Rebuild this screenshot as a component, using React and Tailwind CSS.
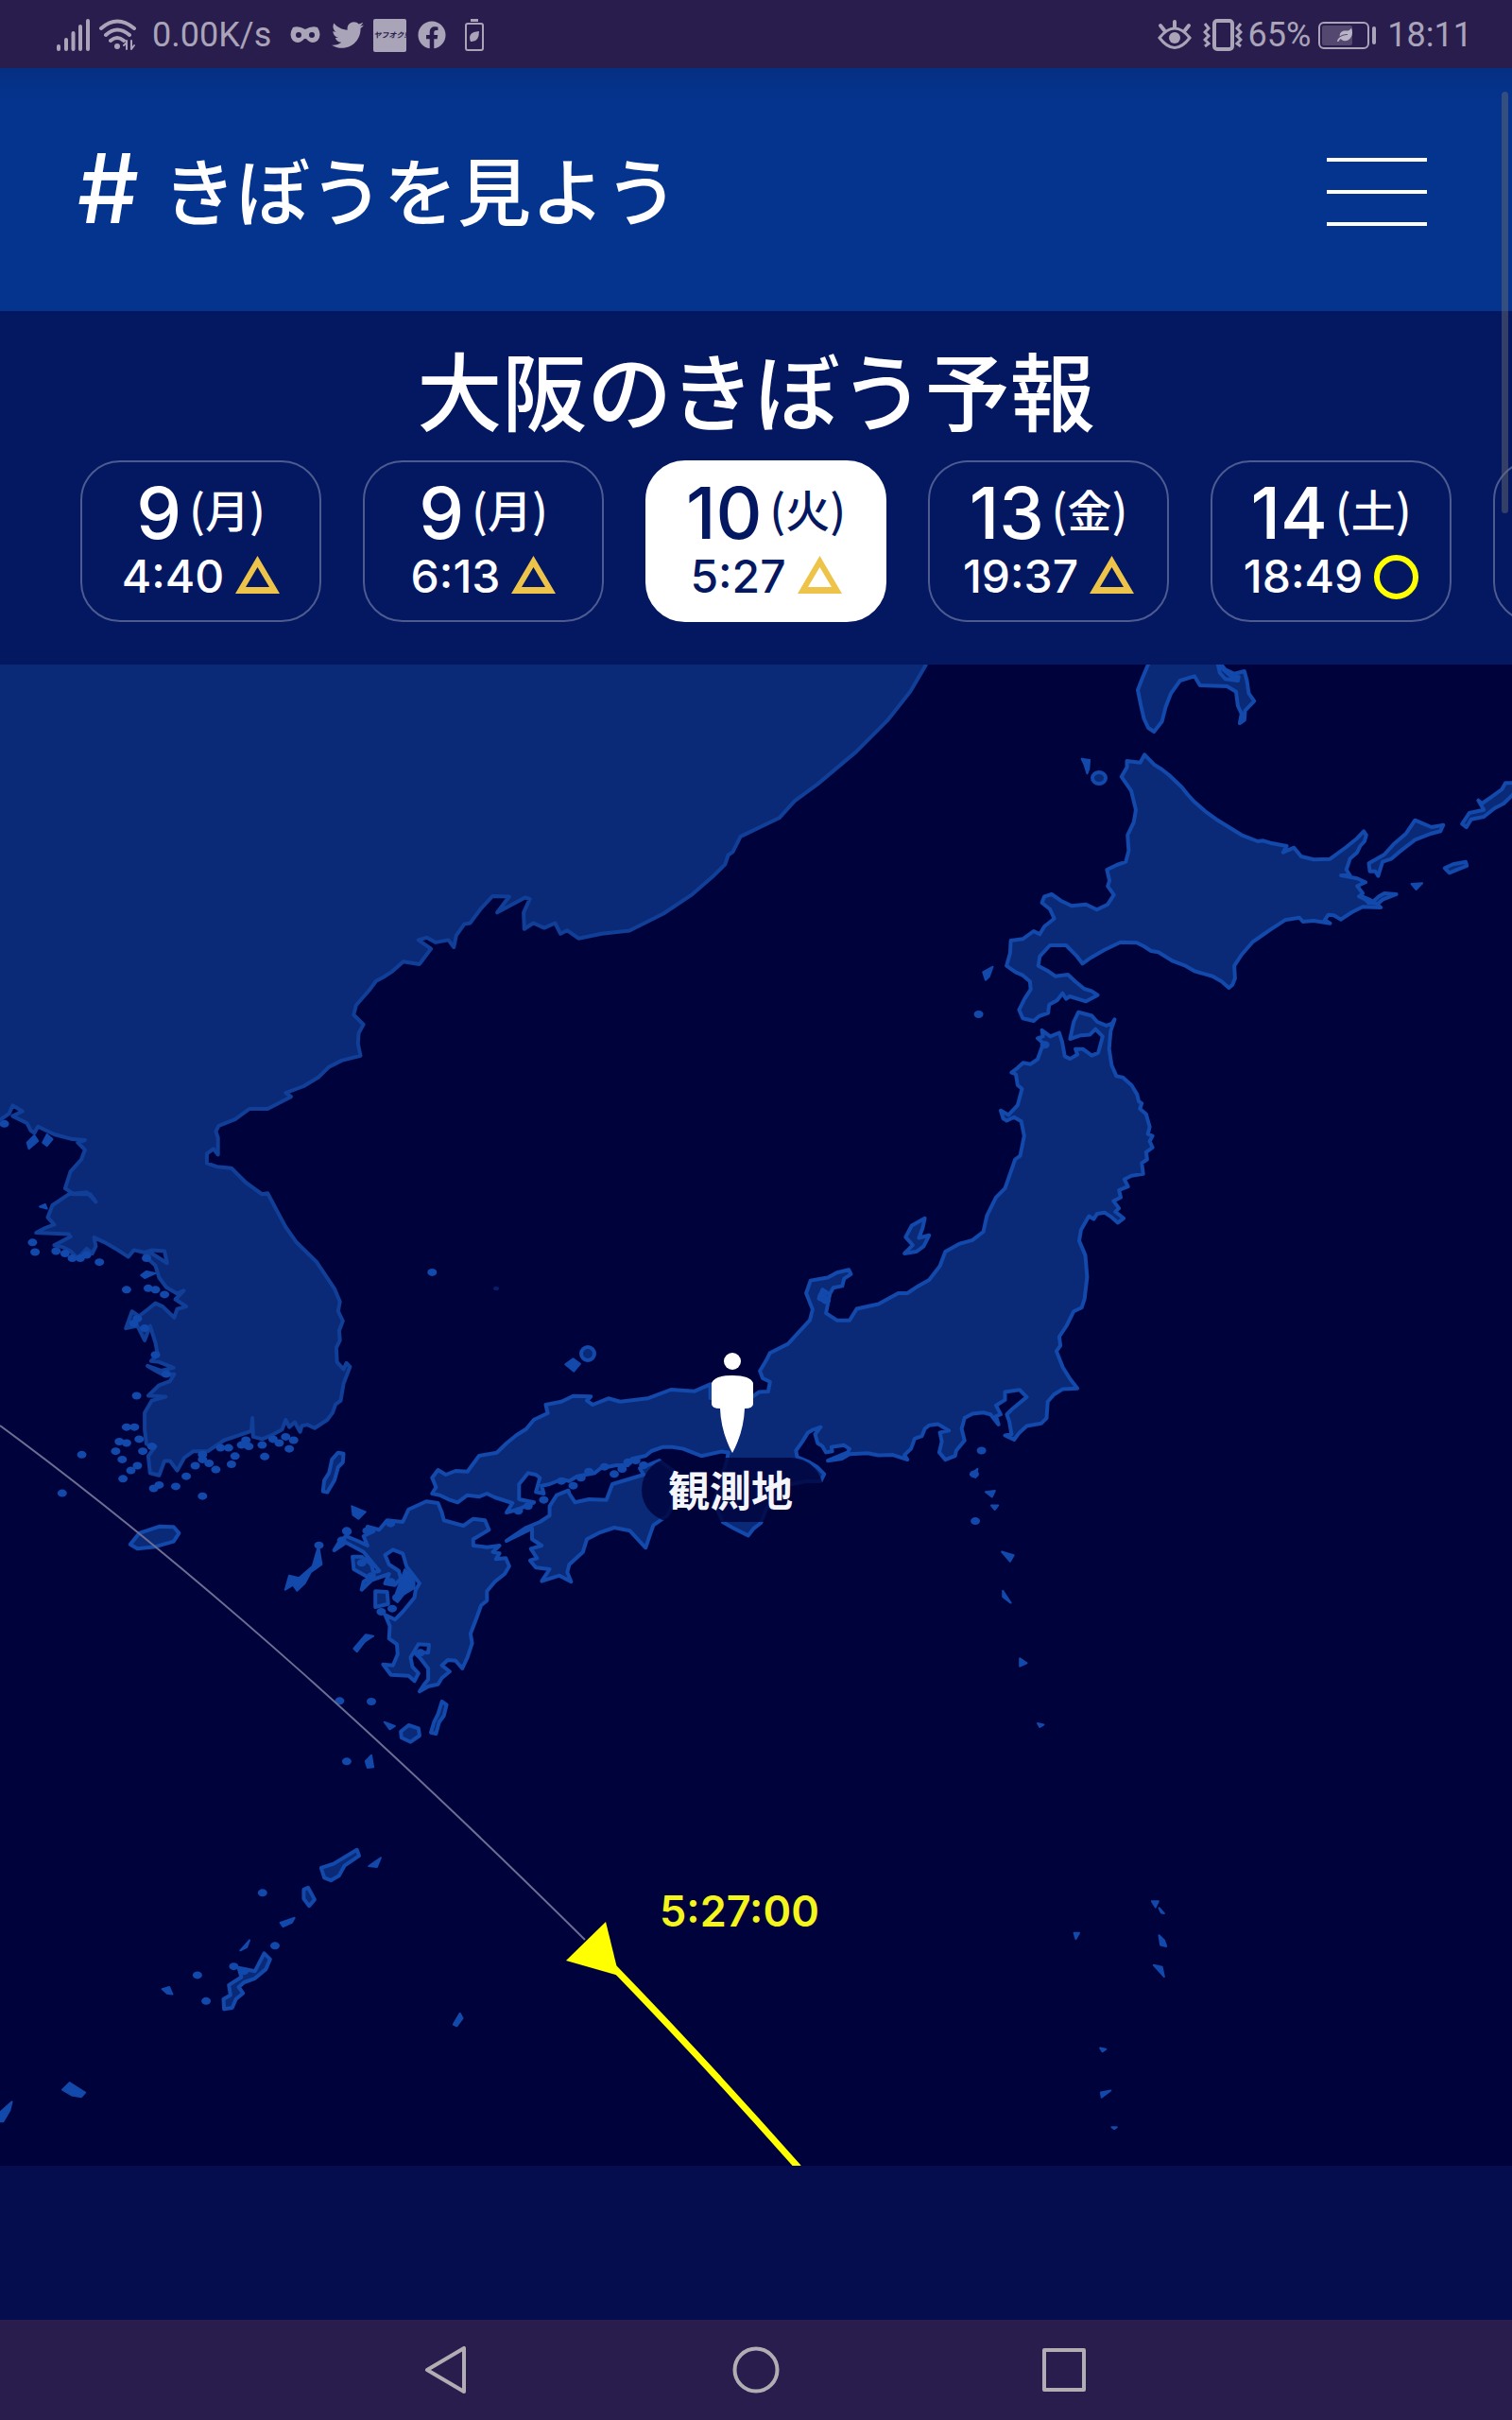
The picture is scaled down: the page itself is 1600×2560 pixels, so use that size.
import { useState } from "react"
import { FaFacebook, FaLeaf, FaTwitter } from "react-icons/fa"

const PASSES = [
  { id: 1, day: "9", weekday: "月", time: "4:40", mark: "fair" },
  { id: 2, day: "9", weekday: "月", time: "6:13", mark: "fair" },
  { id: 3, day: "10", weekday: "火", time: "5:27", mark: "fair" },
  { id: 4, day: "13", weekday: "金", time: "19:37", mark: "fair" },
  { id: 5, day: "14", weekday: "土", time: "18:49", mark: "good" },
  { id: 6, day: "", weekday: "", time: "", mark: "" }
]

// map sheets: origin x, origin y, scale x, scale y
const SHEETS = {
  west: [0, 900, 600 / 1568, 800 / 1568],
  north: [1000, 700, 600 / 1568, 1 / 3],
  east: [700, 1060, 600 / 1568, 600 / 1568],
  south: [250, 1380, 650 / 1568, 1 / 3],
  okinawa: [0, 1900, 900 / 1568, 660 / 1568],
  pacific: [1000, 1550, 600 / 1568, 1010 / 1568],
  over: [0, 0, 1600 / 980, 1600 / 980]
}

function project(sheet, points) {
  const [ox, oy, kx, ky] = SHEETS[sheet]
  return points.split(" ").map((p) => {
    const [x, y] = p.split(",").map(Number)
    return `${(ox + x * kx).toFixed(1)} ${(oy + y * ky).toFixed(1)}`
  })
}

function outline(...parts) {
  return `M${parts.flatMap(([sheet, points]) => project(sheet, points)).join("L")}Z`
}

const CONTINENT = outline(
  ["over", "-10,420 600,420 600,431 590,448 575,467 555,487 530,508 515,519 505,530 480,542 475,552 472,554 470,560 463,567 448,580 430,592 408,603 390,605 375,608"],
  ["west", "1568,165 1550,172 1535,150 1505,160 1475,150 1450,162 1448,128 1465,100 1452,97 1375,128 1408,95 1362,94 1330,120 1300,150 1284,152 1262,175 1255,200 1240,185 1205,190 1180,180 1157,185 1192,203 1160,235 1115,230 1085,250 1060,262 1040,270 1020,290 985,320 978,340 1005,360 992,378 990,400 997,425 945,435 910,448 880,470 840,488 790,502 805,510 740,535 690,535 650,557 605,570 597,582 603,595 603,630 590,618 572,628 572,648 600,655 640,658 680,688 725,712 740,710 765,745 790,780 820,812 875,852 925,908 940,935 935,955 948,975 938,995 940,1015 930,1030 932,1060 950,1075 958,1062 968,1070 950,1105 942,1140 928,1148 920,1165 905,1180 870,1197 850,1190 835,1192 830,1205 815,1185 800,1195 790,1180 780,1200 750,1212 725,1220 700,1215 698,1176 695,1203 660,1212 620,1222 575,1245 535,1245 510,1258 490,1285 470,1265 455,1265 440,1295 415,1290 410,1255 430,1235 405,1230 400,1200 400,1165 420,1140 458,1132 410,1130 440,1108 470,1100 482,1085 455,1088 435,1080 408,1068 445,1078 480,1072 440,1060 418,1058 436,1045 430,1020 415,985 400,1015 380,985 348,990 365,955 385,965 410,950 430,938 450,945 482,968 490,950 515,945 485,930 508,912 490,918 460,905 440,885 430,860 400,840 420,835 462,855 455,830 420,828 400,833 370,828 355,842 320,825 290,812 260,802 265,820 255,835 240,825 215,845 195,830 175,822 150,818 195,800 190,795 100,792 125,782 150,775 132,760 145,735 190,712 240,708 265,728 250,712 205,712 180,700 195,665 225,640 235,620 215,605 235,600 200,598 150,588 105,572 95,585 85,580 75,565 35,550 62,540 35,528 25,545 0,558 -30,560"]
)

const HOKKAIDO = outline([
  "north",
  "552,295 580,328 600,342 620,360 655,398 670,420 690,445 720,475 750,500 785,525 820,550 865,570 880,568 900,575 945,585 935,605 965,590 985,618 1020,628 1065,626 1110,588 1140,560 1158,538 1165,550 1160,570 1148,585 1140,605 1120,625 1110,660 1120,678 1095,678 1140,688 1163,700 1140,712 1155,735 1145,745 1180,765 1200,745 1215,735 1248,738 1210,755 1195,770 1205,780 1155,778 1125,795 1095,818 1075,805 1060,803 1050,820 1065,830 1020,822 990,825 980,812 940,820 900,850 875,870 850,890 820,930 800,965 802,1005 795,1025 785,1035 765,1015 740,998 690,982 665,965 630,950 590,922 570,918 550,903 530,892 485,890 440,915 405,938 380,958 365,935 335,900 290,900 262,935 258,965 285,982 305,998 340,993 360,1015 385,1038 405,1045 422,1058 390,1078 345,1062 335,1070 325,1052 310,1075 288,1088 285,1115 260,1125 245,1140 215,1132 205,1105 220,1070 237,1040 235,1015 215,995 195,985 170,965 180,925 182,885 215,880 245,855 262,865 275,840 302,815 290,785 268,765 275,745 295,738 320,758 350,775 390,770 420,787 450,770 467,740 450,712 455,695 448,660 475,645 500,635 508,600 505,550 522,510 528,470 515,410 488,365 503,335 503,315 540,320"
])

const HONSHU = outline(
  ["east", "1153,28 1190,38 1205,55 1230,65 1245,60 1253,48 1242,80 1238,130 1245,175 1258,205 1275,208 1300,230 1315,255 1320,275 1328,280 1323,295 1340,310 1350,345 1345,365 1358,370 1350,385 1358,402 1340,415 1343,435 1328,445 1332,475 1300,480 1280,490 1290,510 1265,520 1270,540 1250,550 1265,570 1255,580 1278,598 1262,610 1245,595 1225,582 1205,585 1195,600 1182,592 1160,630 1155,660 1172,700 1177,760 1170,820 1162,845 1140,855 1120,895 1100,925 1103,950 1092,965 1110,1010 1130,1042 1150,1068 1110,1070 1085,1085 1068,1105 1065,1150 1050,1165 1010,1172 990,1190 975,1210 950,1198 968,1195 962,1160 955,1140 970,1125 1010,1092 990,1072 950,1078 950,1100 925,1115 938,1140 925,1145 932,1168 910,1140 890,1135 860,1138 838,1150 830,1180 838,1212 815,1240 812,1255 785,1265 768,1245 775,1215 770,1190 795,1185 765,1167 740,1170 728,1180 720,1200 700,1207 690,1235 672,1252 680,1265 640,1252 600,1253 570,1247 520,1250 500,1262 460,1268 515,1245 520,1235 505,1225 470,1230 472,1242 455,1245 445,1228 432,1220 425,1195 440,1175 420,1182 405,1190 390,1215 372,1240 375,1258 405,1270 430,1285 450,1305 440,1325 400,1325 350,1335 310,1380 290,1400 275,1440 255,1455 240,1475 200,1455 170,1438 145,1385 165,1320 180,1270 185,1245 165,1243 110,1255 60,1235 30,1230"],
  ["south", "1090,452 1060,465 1045,480 1010,490 1000,510 970,510 930,520 915,535 870,545 850,560 830,555 800,570 780,575 785,600 765,595 775,550 765,540 745,535 722,570 722,618 760,628 720,650 690,660 705,630 660,612 640,600 620,610 590,605 565,628 545,620 520,605 500,600 510,580 500,550 515,525 535,540 560,528 590,530 620,480 665,470 690,440 715,415 740,395 760,365 795,345 790,318 830,308 860,290 905,292 895,305 910,318 950,298 980,308 1050,298 1110,270 1170,275 1210,253"],
  ["east", "135,1095 250,1092 270,1078 295,1077 300,1050 280,1040 272,1020 290,990 300,970 350,945 410,880 418,850 400,805 412,770 440,765 460,762 485,748 518,740 524,752 505,765 500,785 475,790 465,808 460,835 455,860 485,880 520,880 540,848 600,835 655,805 680,805 710,785 740,768 770,730 785,690 825,668 860,658 890,635 900,590 925,540 950,515 978,435 992,425 1003,370 995,330 975,318 955,328 945,322 938,300 960,312 985,285 997,240 985,230 980,200 968,195 985,182 1000,168 1020,172 1040,158 1052,125 1065,122 1040,100 1055,95 1052,78 1075,95 1100,85 1108,110 1115,150 1130,157 1150,145 1145,130 1165,130 1190,148 1208,140 1220,95 1200,75 1185,90 1160,92 1130,102 1140,55"]
)

const KYUSHU = outline([
  "south",
  "485,625 515,630 525,660 530,685 580,702 605,680 635,685 645,715 605,745 605,765 640,770 672,765 655,785 672,790 663,808 688,805 697,830 685,855 660,880 640,910 640,940 625,955 615,990 598,1045 602,1075 590,1120 577,1155 560,1130 540,1128 525,1145 545,1165 525,1185 515,1205 490,1212 468,1228 480,1205 490,1190 490,1155 468,1120 455,1105 490,1105 492,1080 465,1078 445,1120 450,1150 465,1170 455,1195 440,1178 395,1175 375,1142 400,1145 412,1110 410,1078 390,1060 392,1020 380,985 405,1000 425,975 455,930 458,905 468,885 435,832 425,790 400,778 380,795 390,825 415,845 420,870 405,890 380,885 390,855 345,875 320,905 325,880 340,868 300,840 297,800 320,800 345,825 350,850 365,845 325,785 280,755 250,780 262,755 280,735 310,750 335,765 325,735 350,720 335,705 365,715 385,685 425,690 440,650"
])

const SHIKOKU = outline([
  "south",
  "850,600 865,628 900,618 945,620 960,570 1000,555 1040,540 1030,520 1080,495 1150,560 1100,670 1065,700 1055,735 1045,772 1005,718 965,708 925,725 895,745 885,785 850,825 845,850 855,880 825,860 780,878 800,840 765,835 750,812 768,805 752,775 780,765 755,745 755,710 690,750 740,708 775,690 800,670 800,640 818,605 848,590"
])

const LAND = [
  outline(["north", "565,0 545,55 533,90 542,140 550,180 562,210 578,222 600,190 610,145 625,100 650,60 690,46 705,75 780,78 805,95 810,140 820,165 815,195 828,185 830,155 855,125 840,100 835,60 828,30 800,38 775,25 757,0"]),
  outline(["north", "1300,503 1345,525 1378,518 1370,538 1345,545 1300,565 1255,605 1235,625 1210,635 1198,680 1190,665 1175,665 1172,640 1215,612 1240,580 1275,545"]),
  outline(["north", "1590,385 1550,385 1540,405 1510,430 1485,450 1475,440 1490,470 1450,480 1430,515 1442,525 1455,500 1490,492 1520,465 1545,450 1590,400"]),
  outline(["north", "1382,655 1405,643 1440,635 1443,648 1420,658 1395,670"]),
  outline(["east", "728,598 692,618 675,650 695,672 672,695 705,690 725,675 740,645 712,652 722,625"]),
  outline(["west", "935,1248 950,1250 948,1268 935,1278 925,1305 905,1330 893,1328 897,1305 910,1290 918,1262"]),
  outline(["west", "360,1438 385,1415 440,1401 480,1402 495,1415 480,1432 430,1443 380,1447"]),
  outline(["south", "525,1260 537,1270 530,1305 518,1325 510,1362 497,1358 505,1325 515,1300"]),
  outline(["south", "440,1335 465,1345 468,1368 445,1388 422,1375 420,1355"]),
  outline(["south", "355,910 385,912 388,950 355,960"]),
  outline(["okinawa", "658,135 662,150 635,175 625,200 610,212 598,205 592,180 615,170"]),
  outline(["okinawa", "568,230 580,260 570,276 560,258 560,235"]),
  outline(["okinawa", "487,395 498,410 490,435 470,458 450,468 440,480 448,495 435,510 428,532 413,535 412,510 425,500 422,475 445,455 440,432 470,440"])
]

// islets too small to show any land inside the coast line
const ISLETS = [
  outline(["north", "378,308 400,312 398,340 393,355 385,325"]),
  outline(["north", "105,985 132,968 122,1000 112,1010"]),
  outline(["north", "1290,705 1320,703 1303,723"]),
  outline(["north", "1150,740 1175,752 1200,770 1170,768"]),
  outline(["south", "125,905 135,860 160,868 195,830 210,765 218,825 190,850 175,885 155,908 145,890"]),
  outline(["south", "330,1048 350,1052 328,1070 308,1102 300,1092"]),
  outline(["south", "295,640 330,658 312,680 298,668"]),
  outline(["south", "840,190 860,172 878,188 862,212"]),
  outline(["south", "378,1325 405,1338 392,1348"]),
  outline(["south", "330,1450 345,1430 350,1468 335,1470"]),
  outline(["south", "430,840 455,870 455,900 428,920 412,945 402,935"]),
  outline(["okinawa", "702,155 695,178 680,176"]),
  outline(["okinawa", "517,318 543,306 538,318 522,328"]),
  outline(["okinawa", "460,362 455,380 443,388"]),
  outline(["okinawa", "299,485 312,480 318,498 308,496"]),
  outline(["okinawa", "848,546 853,558 842,578 836,574"]),
  outline(["okinawa", "128,720 157,745 150,756 132,752 115,738"]),
  outline(["okinawa", "22,768 18,790 6,818 -4,818 -4,800"]),
  outline(["west", "75,605 95,590 105,602 80,618"]),
  outline(["west", "118,605 130,588 145,598 130,612"]),
  outline(["west", "110,738 125,733 130,742"]),
  outline(["west", "390,880 405,872 430,876 400,886"]),
  outline(["pacific", "70,15 90,6 85,20"]),
  outline(["pacific", "112,44 138,42 130,52"]),
  outline(["pacific", "128,66 147,66 138,73"]),
  outline(["pacific", "157,142 190,148 180,158"]),
  outline(["pacific", "160,206 182,226 160,216"]),
  outline(["pacific", "207,317 226,325 207,330"]),
  outline(["pacific", "256,424 273,426 262,430"]),
  outline(["pacific", "572,716 590,716 582,726"]),
  outline(["pacific", "592,727 606,736 598,735"]),
  outline(["pacific", "592,772 606,780 612,790 596,788"]),
  outline(["pacific", "577,821 600,824 606,840"]),
  outline(["pacific", "357,768 371,768 362,778"]),
  outline(["pacific", "429,957 445,959 435,963"]),
  outline(["pacific", "431,1030 458,1027 433,1038"]),
  outline(["pacific", "461,1087 475,1087 468,1090"])
]

// rocks along the Korean coast and in the Inland Sea, one dot each
const ROCKS = [
  ...project("west", "12,566 90,812 97,832 155,830 180,835 200,845 222,845 240,838 275,853 350,910 410,907 430,910 378,1130 350,1195 372,1195 330,1225 350,1228 320,1245 338,1262 385,1220 395,1245 420,1235 362,1285 380,1275 340,1302 425,1322 440,1315 486,1318 515,1297 540,1275 560,1262 578,1270 560,1252 597,1283 610,1238 632,1238 650,1255 640,1272 668,1232 688,1235 680,1222 725,1232 732,1256 755,1220 772,1228 790,1215 800,1240 812,1222 560,1338 172,1332 226,1252 1195,874 960,1412 945,1430 882,1440 1015,1410 1080,1395 380,970 400,990 370,980 430,1045 460,1085 455,920 405,845"),
  ...project("south", "785,620 745,640 720,655 900,530 940,515 965,538 985,522 1000,500 1020,495 1040,510 830,560 860,575 880,550 395,880 410,930 370,975 398,965 320,820 345,862 282,718 345,1260 282,1450 264,1258 470,1105"),
  ...project("east", "877,34 885,1240 865,1305 868,1435 445,812 455,825 1060,118"),
  ...project("okinawa", "507,376 431,428 364,450 380,515 484,243 450,440")
]

function LandMap() {
  return (
    <svg
      viewBox="0 703 1600 1588"
      className="block w-full bg-[#00033b]"
      role="img"
      aria-label="きぼうの軌道"
    >
      <g fill="#0a2a78" stroke="#1249ab" strokeWidth="4" strokeLinejoin="round">
        <path d={CONTINENT} stroke="#113f98" />
        <path d={HOKKAIDO} />
        <path d={HONSHU} />
        <path d={KYUSHU} />
        <path d={SHIKOKU} />
        {LAND.map((d, i) => (
          <path key={i} d={d} />
        ))}
        <ellipse cx="1163" cy="823" rx="7" ry="6" />
        <ellipse cx="622" cy="1432" rx="7" ry="7" />
        <path d={outline(["north", "755,10 760,35 775,55 810,60 812,48 790,45"])} />
        <path d={outline(["east", "435,820 445,795 465,808 460,830"])} />
      </g>
      <g fill="#1249ab" stroke="#1249ab" strokeWidth="2" strokeLinejoin="round">
        {ISLETS.map((d, i) => (
          <path key={i} d={d} />
        ))}
        {ROCKS.map((point, i) => {
          const [x, y] = point.split(" ")
          return <ellipse key={i} cx={x} cy={y} rx="4" ry="3" />
        })}
        <ellipse cx="525" cy="1363" rx="2" ry="1" opacity="0.4" />
      </g>

      {/* orbit */}
      <path
        d="M0 1508C220 1670 430 1865 619 2052"
        fill="none"
        stroke="#6b6d92"
        strokeWidth="2"
      />
      <path d="M650 2082Q745 2180 845 2293" fill="none" stroke="#ffff00" strokeWidth="7" />
      <path d="M641 2033L599 2074L655 2090Z" fill="#ffff00" />
      <text
        x="698"
        y="2038"
        fill="#f5f51e"
        fontSize="45"
        fontWeight="600"
        fontFamily="Inter, sans-serif"
      >
        5:27:00
      </text>

      {/* observer */}
      <rect x="679" y="1542" width="192" height="68" rx="34" fill="#00033b" opacity="0.82" />
      <circle cx="775" cy="1440" r="9" fill="#ffffff" />
      <path
        d="M753 1463Q756 1455 775 1455Q794 1455 797 1463V1485Q797 1490 788 1490Q787 1515 775 1537Q763 1515 762 1490Q753 1490 753 1485Z"
        fill="#ffffff"
      />
      <text
        x="773"
        y="1594"
        textAnchor="middle"
        fill="#f4f5fb"
        fontSize="44"
        fontWeight="700"
        fontFamily="'Noto Sans CJK JP', sans-serif"
      >
        観測地
      </text>
    </svg>
  )
}

function StatusBar() {
  return (
    <div className="flex h-[72px] items-center justify-between bg-[#291d4d] pt-[2px] pr-[42px] pl-[60px] font-[Roboto,sans-serif] text-4xl text-[#aaa4b9]">
      <div className="flex items-center">
        <svg viewBox="0 0 35 34" className="h-[34px] w-[35px]" stroke="currentColor" strokeWidth="4" strokeLinecap="round">
          <path d="M2 29V32M10 22V32M17.500 15V32M25 8V32M33 2V32" />
        </svg>
        <svg viewBox="0 0 40 34" className="ml-[10px] h-[34px] w-10" fill="none" stroke="currentColor" strokeWidth="4" strokeLinecap="round">
          <path d="M2 10Q19 -5 37 10M7 17Q19 6 32 17M12 23Q19 17 26 23" />
          <circle cx="19" cy="29" r="3" fill="currentColor" stroke="none" />
          <path d="M29 23V32M26 28L29 25M34 23V32M34 32L37 28" strokeWidth="2" />
        </svg>
        <span className="ml-4">0.00K/s</span>
        <svg viewBox="0 0 32 18" className="ml-5 h-[18px] w-8" fill="currentColor">
          <path
            fillRule="evenodd"
            d="M3 1Q9 -1 16 3Q23 -1 29 1Q34 9 29 15Q23 20 17 13H15Q9 20 3 15Q-2 9 3 1ZM9 6A3 3 0 1 0 9 12A3 3 0 1 0 9 6ZM23 6A3 3 0 1 0 23 12A3 3 0 1 0 23 6Z"
          />
        </svg>
        <FaTwitter className="ml-3 h-9 w-[34px]" />
        <span className="ml-[10px] flex h-[35px] w-[35px] items-center justify-center rounded-xs bg-[#aaa4b9] font-['Noto_Sans_CJK_JP',sans-serif] text-[8px] leading-none font-bold text-[#291d4d] italic">
          ヤフオク!
        </span>
        <FaFacebook className="ml-3 h-[30px] w-[30px]" />
        <svg viewBox="0 0 20 34" className="ml-5 h-[34px] w-5" fill="none" stroke="currentColor" strokeWidth="2">
          <path d="M6 1.500H14" strokeWidth="3" />
          <rect x="1" y="5" width="18" height="28" rx="2" />
          <path d="M6 24Q2 14 15 13Q15 25 6 24Z" fill="currentColor" stroke="none" />
        </svg>
      </div>
      <div className="flex items-center">
        <svg viewBox="0 0 36 32" className="h-8 w-9" fill="none" stroke="currentColor" strokeWidth="4" strokeLinecap="round">
          <path d="M2 19Q18 -1 34 19Q18 40 2 19Z" strokeWidth="3" />
          <circle cx="18" cy="19" r="6" fill="currentColor" stroke="none" />
          <path d="M18 2V8M3 6L7 11M33 6L29 11" />
        </svg>
        <svg viewBox="0 0 42 34" className="ml-3 h-[34px] w-[42px]" fill="none" stroke="currentColor" strokeWidth="4">
          <rect x="12" y="2" width="19" height="30" rx="3" />
          <path d="M2 5L6 10L2 14L6 18L2 22L6 26L2 29M40 5L36 10L40 14L36 18L40 22L36 26L40 29" strokeWidth="3" />
        </svg>
        <span className="ml-[6px]">65%</span>
        <span className="ml-2 flex items-center gap-[3px]">
          <span className="flex h-[29px] w-[54px] items-center rounded-md border-2 border-current p-[2px]">
            <span className="flex h-full w-8 items-center justify-end rounded-xs bg-[#544870]">
              <FaLeaf className="h-4 w-4 text-[#b9b3c6]" />
            </span>
          </span>
          <span className="h-[19px] w-1 rounded-full bg-current" />
        </span>
        <span className="ml-3">18:11</span>
      </div>
    </div>
  )
}

function Mark({ kind }) {
  if (kind === "good") {
    return (
      <svg viewBox="0 0 47 47" className="h-[47px] w-[47px]">
        <circle cx="23.500" cy="23.500" r="20.500" fill="none" stroke="#ffff00" strokeWidth="6" />
      </svg>
    )
  }
  return (
    <svg viewBox="0 0 47 47" className="h-[47px] w-[47px]">
      <path
        fillRule="evenodd"
        d="M23.500 1L47 41H0ZM23.500 13L11 34H36Z"
        fill="#edc449"
      />
    </svg>
  )
}

function PassButton({ pass, selected, onSelect }) {
  return (
    <button
      onClick={onSelect}
      aria-pressed={selected}
      className={
        "flex h-[171px] w-[255px] shrink-0 flex-col items-center rounded-[42px] border-2 pt-[18px] font-medium " +
        (selected
          ? "border-white bg-white text-[#041862]"
          : "border-[#4d5b90] text-white")
      }
    >
      {pass.day && (
        <>
          <span className="flex h-[70px] items-start gap-2">
            <span className="font-[Inter,sans-serif] text-[76px] leading-[70px]">{pass.day}</span>
            <span className="font-['Noto_Sans_CJK_JP',sans-serif] text-[47px] leading-[62px]">
              ({pass.weekday})
            </span>
          </span>
          <span className="flex h-[66px] items-center gap-3">
            <span className="font-[Inter,sans-serif] text-5xl leading-[60px]">{pass.time}</span>
            <Mark kind={pass.mark} />
          </span>
        </>
      )}
    </button>
  )
}

export default function App() {
  const [selectedId, setSelectedId] = useState(3)

  return (
    <div className="relative flex min-h-screen flex-col overflow-hidden bg-[#050d4e] font-['Noto_Sans_CJK_JP',sans-serif] text-white">
      <StatusBar />

      <header className="flex h-[257px] items-center justify-between bg-linear-to-b from-[#052f82] to-[#05348f] to-15% pt-1 pr-[90px] pl-[82px]">
        <h1 className="flex items-center pb-2 text-[78px] leading-none font-medium">
          <span className="w-[90px] font-[Inter,sans-serif] text-[102px] leading-none">#</span>
          きぼうを見よう
        </h1>
        <button aria-label="メニュー" className="flex w-[106px] flex-col gap-[30px]">
          <span className="h-1 bg-white" />
          <span className="h-1 bg-white" />
          <span className="h-1 bg-white" />
        </button>
      </header>

      <section className="bg-[#041862] pt-9 pb-[45px]">
        <h2 className="text-center text-[90px] leading-[90px] font-medium">大阪のきぼう予報</h2>
        <div className="mt-8 flex gap-11 overflow-hidden pl-[85px]">
          {PASSES.map((pass) => (
            <PassButton
              key={pass.id}
              pass={pass}
              selected={pass.id === selectedId}
              onSelect={() => setSelectedId(pass.id)}
            />
          ))}
        </div>
      </section>

      <LandMap />

      <div className="min-h-[163px] flex-1" />

      <nav className="flex h-[106px] items-center justify-center gap-[278px] bg-[#291d4d] text-[#b0adb3]">
        <button aria-label="戻る">
          <svg viewBox="0 0 50 50" className="h-[50px] w-[50px]" fill="none" stroke="currentColor" strokeWidth="4" strokeLinejoin="round">
            <path d="M44 2V48L5 25Z" />
          </svg>
        </button>
        <button aria-label="ホーム">
          <svg viewBox="0 0 50 50" className="h-[50px] w-[50px]" fill="none" stroke="currentColor" strokeWidth="4">
            <circle cx="25" cy="25" r="22.500" />
          </svg>
        </button>
        <button aria-label="履歴">
          <svg viewBox="0 0 50 50" className="h-[50px] w-[50px]" fill="none" stroke="currentColor" strokeWidth="4" strokeLinejoin="round">
            <rect x="2" y="4" width="42" height="42" />
          </svg>
        </button>
      </nav>

      {/* page scrollbar */}
      <div className="absolute top-[97px] right-1 h-[446px] w-[7px] rounded-full bg-[#6e6e6e]/45" />
    </div>
  )
}
